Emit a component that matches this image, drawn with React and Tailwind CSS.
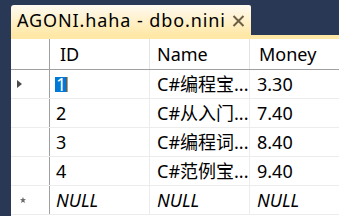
import React from 'react';

const rows = [
  { id: '1', name: 'C#编程宝...', money: '3.30', current: true },
  { id: '2', name: 'C#从入门...', money: '7.40' },
  { id: '3', name: 'C#编程词...', money: '8.40' },
  { id: '4', name: 'C#范例宝...', money: '9.40' },
];

const font = { fontFamily: '"Noto Sans", "Noto Sans CJK SC", sans-serif' };

function Caret() {
  return (
    <svg width="5" height="8" viewBox="0 0 5 8">
      <path d="M0 0 L5 4 L0 8 Z" fill="#4a4a4a" />
    </svg>
  );
}

function Star() {
  return (
    <svg width="6" height="6" viewBox="0 0 6 6">
      <path d="M3 0 L3.8 2 L6 2.2 L4.3 3.6 L4.9 6 L3 4.7 L1.1 6 L1.7 3.6 L0 2.2 L2.2 2 Z" fill="#6b6b6b" />
    </svg>
  );
}

export default function App() {
  return (
    <div className="w-[339px] h-[216px] bg-[#293955] overflow-hidden pl-[11px] flex flex-col text-[18px] text-black" style={font}>
      {/* Document tab */}
      <div className="pt-[5px] flex">
        <div className="w-[240px] h-[30px] rounded-tl-[3px] rounded-tr-[2px] bg-gradient-to-b from-[#fffaf0] to-[#ffe8a6] flex items-center pl-[6px] gap-[6px]">
          <span className="leading-none whitespace-nowrap tracking-[0.9px]">AGONI.haha - dbo.nini</span>
          <svg width="13" height="12" viewBox="0 0 13 12" className="mt-[2px]">
            <path d="M1.5 1 L11.5 11 M11.5 1 L1.5 11" stroke="#6b5f45" strokeWidth="2" />
          </svg>
        </div>
      </div>
      <div className="h-[4px] bg-[#ffe8a6]" />

      {/* Data grid */}
      <div className="flex-1 bg-white">
        <div className="grid grid-cols-[39px_100px_100px_1fr] h-[31px] border-b border-[#a0a0a0]">
          <div className="border-r border-[#a0a0a0]" />
          <div className="border-r border-[#e3e3e3] flex items-center pl-[10px]">ID</div>
          <div className="border-r border-[#e3e3e3] flex items-center pl-[7px]">Name</div>
          <div className="flex items-center pl-[9px]">Money</div>
        </div>
        {rows.map((r) => (
          <div key={r.id} className="grid grid-cols-[39px_100px_100px_1fr] h-[29px] border-b border-[#ececec]">
            <div className="border-r border-[#a0a0a0] flex items-center pl-[6px]">
              {r.current && <Caret />}
            </div>
            <div className="border-r border-[#ececec] flex items-center pl-[5px]">
              {r.current ? (
                <span className="bg-[#0078d7] text-white px-[1px] leading-[15px] border-r border-[#ff8c1a]">{r.id}</span>
              ) : (
                <span className="pl-[1px]">{r.id}</span>
              )}
            </div>
            <div className="border-r border-[#ececec] flex items-center pl-[7px] whitespace-nowrap overflow-hidden">{r.name}</div>
            <div className="flex items-center pl-[7px]">{r.money}</div>
          </div>
        ))}
        <div className="grid grid-cols-[39px_100px_100px_1fr] h-[29px] border-b border-[#ececec] italic">
          <div className="border-r border-[#a0a0a0] flex items-center pl-[9px]">
            <Star />
          </div>
          <div className="border-r border-[#ececec] flex items-center pl-[6px]">NULL</div>
          <div className="border-r border-[#ececec] flex items-center pl-[7px]">NULL</div>
          <div className="flex items-center pl-[7px]">NULL</div>
        </div>
      </div>
    </div>
  );
}
